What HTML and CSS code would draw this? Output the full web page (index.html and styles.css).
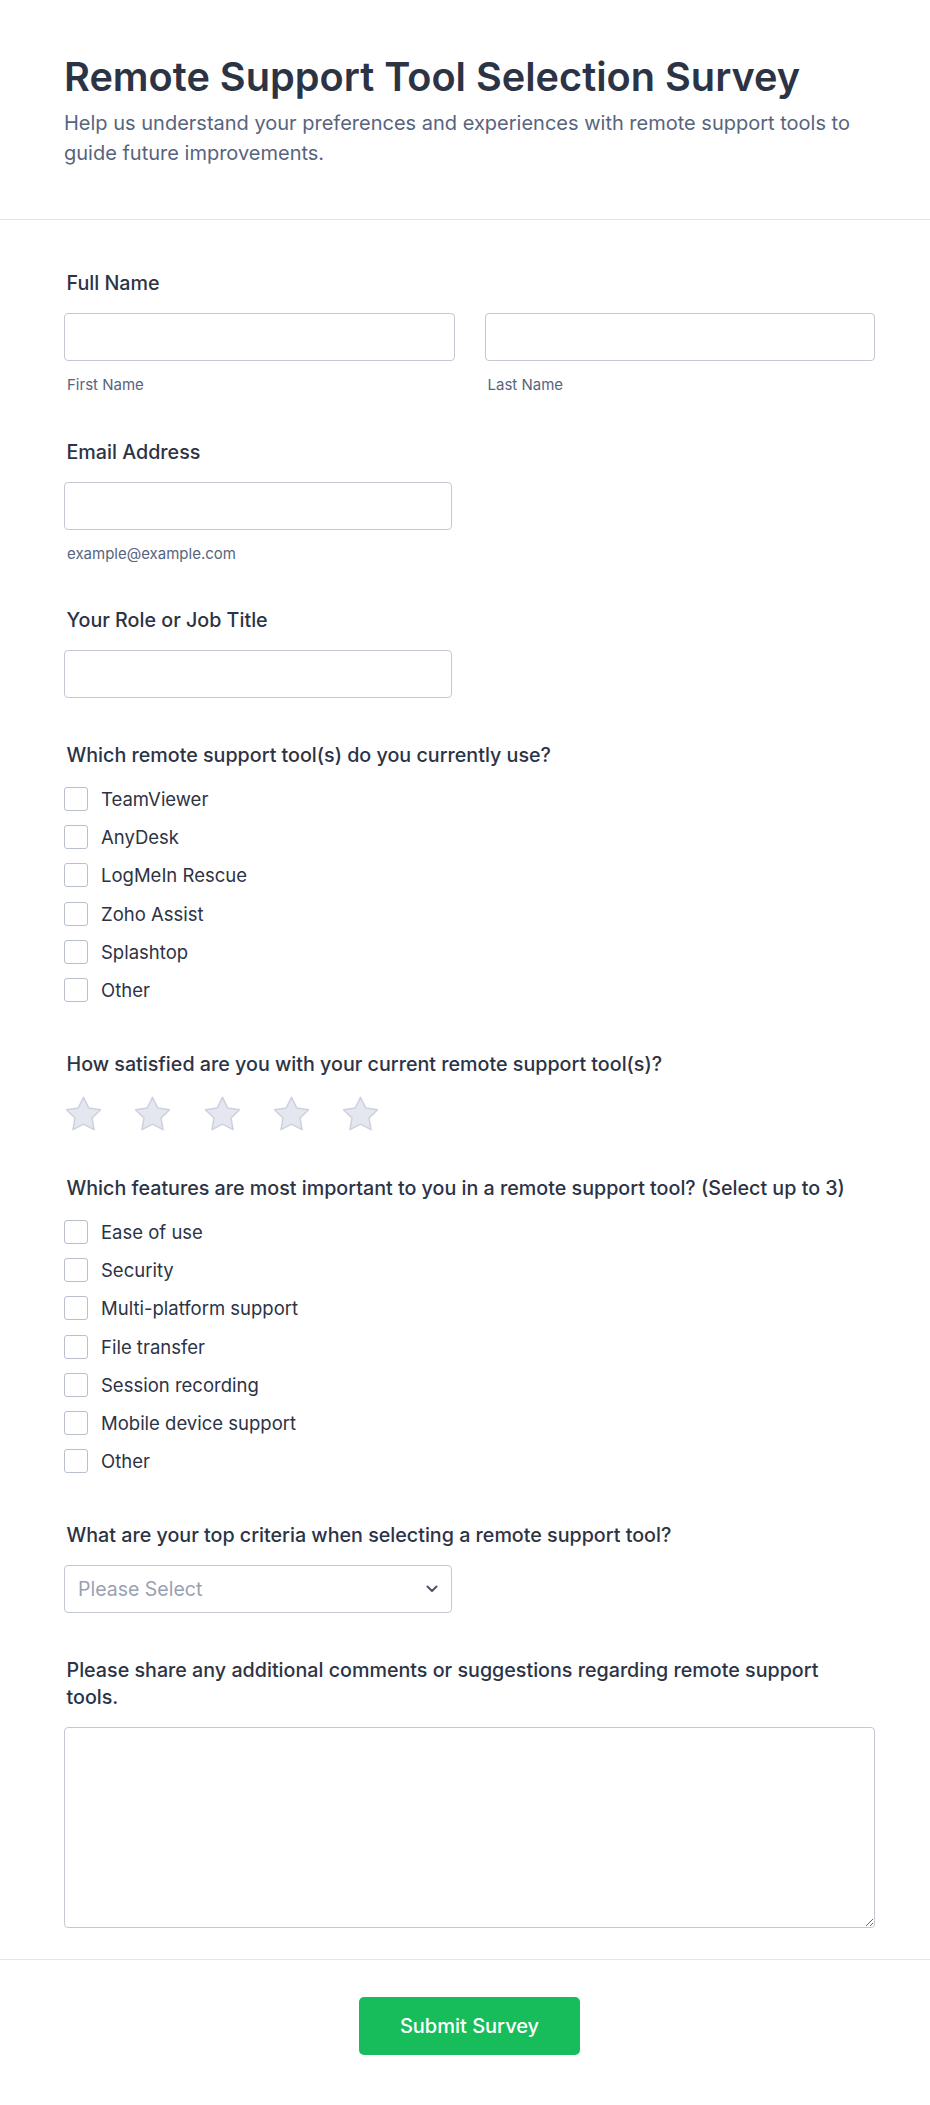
FILE: index.html
```html
<!DOCTYPE html>
<html lang="en">
<head>
<meta charset="utf-8">
<title>Remote Support Tool Selection Survey</title>
<link rel="stylesheet" href="styles.css">
</head>
<body>
<header class="header">
  <h1 class="title">Remote Support Tool Selection Survey</h1>
  <p class="subtitle">Help us understand your preferences and experiences with remote support tools to guide future improvements.</p>
</header>
<main class="form">
  <div class="field">
    <label class="label">Full Name</label>
    <div class="name-row">
      <div class="col">
        <input class="input" type="text">
        <span class="sublabel">First Name</span>
      </div>
      <div class="col">
        <input class="input" type="text">
        <span class="sublabel">Last Name</span>
      </div>
    </div>
  </div>

  <div class="field">
    <label class="label">Email Address</label>
    <input class="input half" type="email">
    <span class="sublabel">example@example.com</span>
  </div>

  <div class="field">
    <label class="label">Your Role or Job Title</label>
    <input class="input half" type="text">
  </div>

  <div class="field group">
    <label class="label label-group">Which remote support tool(s) do you currently use?</label>
    <div class="options">
      <div class="option"><span class="box"></span><span class="opt-text">TeamViewer</span></div>
      <div class="option"><span class="box"></span><span class="opt-text">AnyDesk</span></div>
      <div class="option"><span class="box"></span><span class="opt-text">LogMeIn Rescue</span></div>
      <div class="option"><span class="box"></span><span class="opt-text">Zoho Assist</span></div>
      <div class="option"><span class="box"></span><span class="opt-text">Splashtop</span></div>
      <div class="option"><span class="box"></span><span class="opt-text">Other</span></div>
    </div>
  </div>

  <div class="field">
    <label class="label label-group">How satisfied are you with your current remote support tool(s)?</label>
    <div class="stars">
      <svg class="star" viewBox="1.2 1.2 21.6 20.6" width="37" height="35"><path d="M12 2l3.09 6.26L22 9.27l-5 4.87 1.18 6.88L12 17.77l-6.18 3.25L7 14.14 2 9.27l6.91-1.01L12 2z"/></svg>
      <svg class="star" viewBox="1.2 1.2 21.6 20.6" width="37" height="35"><path d="M12 2l3.09 6.26L22 9.27l-5 4.87 1.18 6.88L12 17.77l-6.18 3.25L7 14.14 2 9.27l6.91-1.01L12 2z"/></svg>
      <svg class="star" viewBox="1.2 1.2 21.6 20.6" width="37" height="35"><path d="M12 2l3.09 6.26L22 9.27l-5 4.87 1.18 6.88L12 17.77l-6.18 3.25L7 14.14 2 9.27l6.91-1.01L12 2z"/></svg>
      <svg class="star" viewBox="1.2 1.2 21.6 20.6" width="37" height="35"><path d="M12 2l3.09 6.26L22 9.27l-5 4.87 1.18 6.88L12 17.77l-6.18 3.25L7 14.14 2 9.27l6.91-1.01L12 2z"/></svg>
      <svg class="star" viewBox="1.2 1.2 21.6 20.6" width="37" height="35"><path d="M12 2l3.09 6.26L22 9.27l-5 4.87 1.18 6.88L12 17.77l-6.18 3.25L7 14.14 2 9.27l6.91-1.01L12 2z"/></svg>
    </div>
  </div>

  <div class="field group">
    <label class="label label-group">Which features are most important to you in a remote support tool? (Select up to 3)</label>
    <div class="options">
      <div class="option"><span class="box"></span><span class="opt-text">Ease of use</span></div>
      <div class="option"><span class="box"></span><span class="opt-text">Security</span></div>
      <div class="option"><span class="box"></span><span class="opt-text">Multi-platform support</span></div>
      <div class="option"><span class="box"></span><span class="opt-text">File transfer</span></div>
      <div class="option"><span class="box"></span><span class="opt-text">Session recording</span></div>
      <div class="option"><span class="box"></span><span class="opt-text">Mobile device support</span></div>
      <div class="option"><span class="box"></span><span class="opt-text">Other</span></div>
    </div>
  </div>

  <div class="field">
    <label class="label">What are your top criteria when selecting a remote support tool?</label>
    <div class="select half">
      <span class="placeholder">Please Select</span>
      <svg class="chevron" width="12" height="8" viewBox="0 0 12 8"><path d="M1.5 1.5l4.5 4.5 4.5-4.5"/></svg>
    </div>
  </div>

  <div class="field last">
    <label class="label">Please share any additional comments or suggestions regarding remote support tools.</label>
    <textarea class="textarea"></textarea>
  </div>
</main>
<footer class="footer">
  <button class="submit" type="button">Submit Survey</button>
</footer>
</body>
</html>
```
FILE: styles.css
```css
* { box-sizing: border-box; }

body {
  margin: 0;
  background: #ffffff;
  font-family: Inter, "Noto Sans", sans-serif;
  color: #2c3345;
}

.header {
  padding: 53px 64px 51px;
  border-bottom: 1px solid #e3e5ec;
}

.title {
  margin: 0;
  font-size: 39.7px;
  line-height: 48px;
  font-weight: 600;
  color: #2c3345;
}

.subtitle {
  margin: 7px 0 0;
  font-size: 20px;
  line-height: 30px;
  color: #57647e;
}

.form {
  padding: 50.2px 55px 31px 64px;
}

.field {
  display: flex;
  flex-direction: column;
  align-items: flex-start;
  margin-bottom: 43.5px;
}

.field.last { margin-bottom: 0; }

.field.group { padding-bottom: 5.5px; }

.label {
  display: block;
  font-size: 19.7px;
  line-height: 27px;
  font-weight: 500;
  color: #2c3345;
  margin-bottom: 16px;
  padding-left: 2.5px;
}

.label-group { margin-bottom: 18px; }

.name-row {
  display: grid;
  grid-template-columns: 1fr 1fr;
  column-gap: 30px;
  width: 100%;
}

.col {
  display: flex;
  flex-direction: column;
}

.input {
  display: block;
  width: 100%;
  height: 48px;
  border: 1px solid #c3c8d4;
  border-radius: 4px;
  background: #fff;
  font-family: inherit;
  font-size: 18px;
  padding: 0 14px;
  margin: 0;
}

.half { width: 388px; }

.sublabel {
  display: block;
  margin-top: 14px;
  font-size: 15px;
  line-height: 20px;
  color: #57647e;
  padding-left: 3px;
}

.options {
  display: flex;
  flex-direction: column;
  gap: 14.3px;
}

.option {
  display: flex;
  align-items: center;
  gap: 13px;
  height: 24px;
}

.box {
  width: 24px;
  height: 24px;
  border: 1px solid #b9bfcc;
  border-radius: 3px;
  background: #fff;
  flex: none;
}

.opt-text {
  font-size: 18.5px;
  line-height: 24px;
  color: #2c3345;
}

.stars {
  display: flex;
  gap: 32.3px;
  padding-left: 1px;
}

.star {
  display: block;
}

.star path {
  fill: #e5e7f0;
  stroke: #cdd1dd;
  stroke-width: 0.9;
  stroke-linejoin: round;
}

.select {
  display: flex;
  align-items: center;
  justify-content: space-between;
  height: 48px;
  border: 1px solid #c3c8d4;
  border-radius: 4px;
  padding: 0 13px 0 13px;
}

.placeholder {
  font-size: 19.5px;
  line-height: 24px;
  color: #9aa1b0;
}

.chevron path {
  fill: none;
  stroke: #4b5468;
  stroke-width: 2;
  stroke-linecap: round;
  stroke-linejoin: round;
}

.textarea {
  display: block;
  width: 100%;
  height: 201px;
  border: 1px solid #c3c8d4;
  border-radius: 4px;
  font-family: inherit;
  font-size: 18px;
  margin: 0;
  padding: 10px 14px;
}

.footer {
  border-top: 1px solid #e3e5ec;
  padding: 37px 55px 51px 64px;
  display: flex;
  justify-content: center;
}

.submit {
  width: 221px;
  height: 58px;
  border: 0;
  border-radius: 5px;
  background: #18bd5b;
  color: #ffffff;
  font-family: inherit;
  font-size: 20px;
  font-weight: 500;
}
```
